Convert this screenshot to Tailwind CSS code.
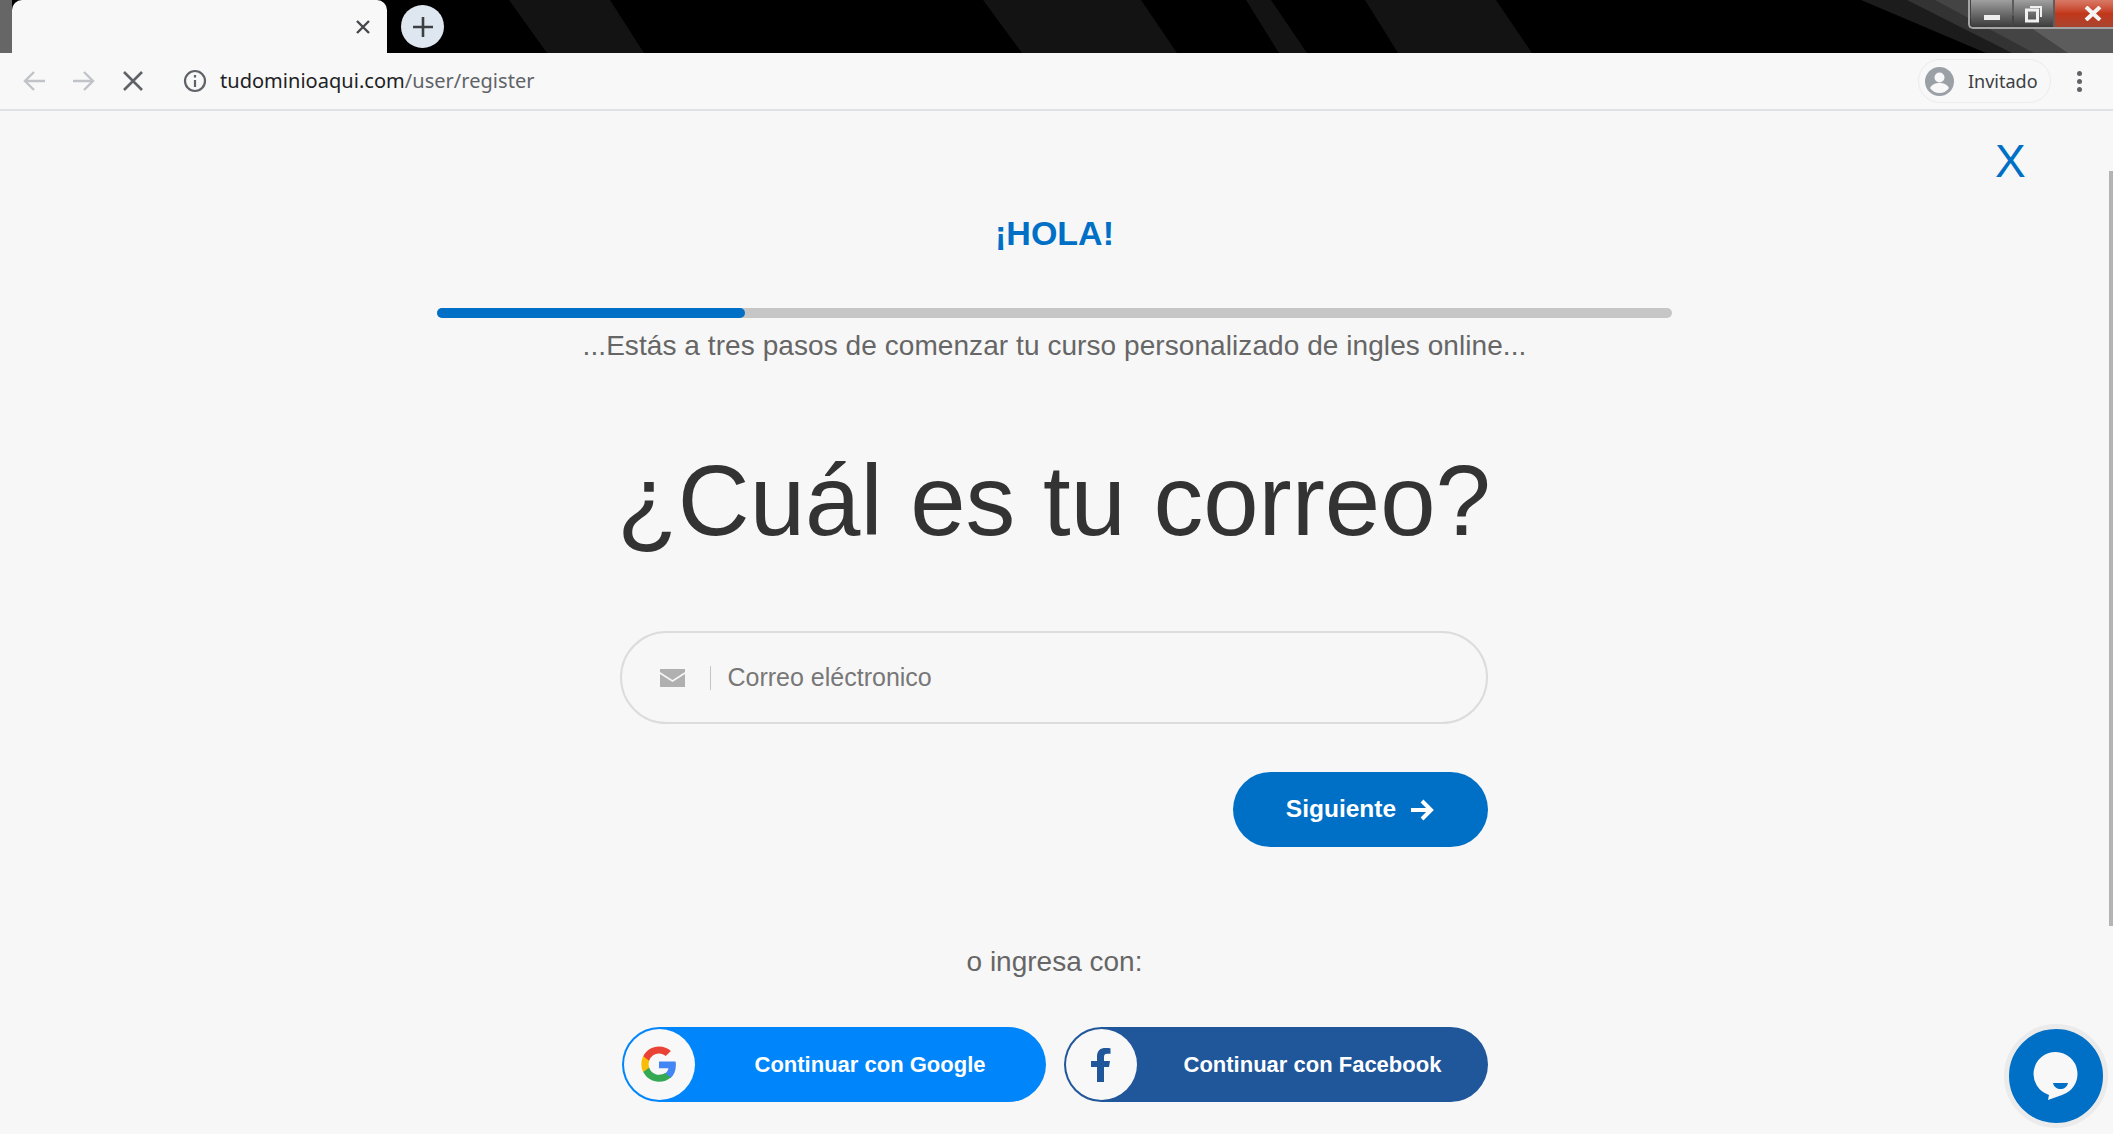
<!DOCTYPE html>
<html lang="es">
<head>
    <meta charset="UTF-8">
    <meta name="viewport" content="width=device-width, initial-scale=1.0">
    <script src="https://cdn.jsdelivr.net/npm/@tailwindcss/browser@4"></script>
    <title>tudominioaqui.com/user/register</title>
</head>
<body class="bg-[#f7f7f7] h-[1134px] overflow-hidden flex flex-col font-['Liberation_Sans',sans-serif]">
    <!-- Barra de pestañas -->
    <div class="relative h-[53px] bg-black flex items-center shrink-0 overflow-hidden">
        <svg class="absolute inset-0" width="2113" height="53" viewBox="0 0 2113 53">
            <polygon points="0,0 12,0 12,53 0,53" fill="#666"/>
            <polygon points="509,0 610,0 644,53 547,53" fill="#131313"/>
            <polygon points="983,0 1141,0 1177,53 1022,53" fill="#131313"/>
            <polygon points="1246,0 1271,0 1307,53 1279,53" fill="#131313"/>
            <polygon points="1365,0 1496,0 1532,53 1398,53" fill="#131313"/>
            <polygon points="1861,0 2113,0 2113,53 1986,53" fill="#1c1c1c"/>
            <polygon points="1907,0 2113,0 2113,53 2012,53" fill="#333"/>
            <polygon points="1935,0 2113,0 2113,53 2034,53" fill="#444"/>
            <polygon points="1990,0 2113,0 2113,53 2068,53" fill="#5c5c5c"/>
        </svg>
        <div class="relative ml-[12px] w-[375px] h-[53px] bg-[#f8f8f8] rounded-t-[10px] flex items-center justify-end pr-[16px]">
            <svg width="16" height="16" viewBox="0 0 16 16" stroke="#45484c" stroke-width="2.4"><path d="M2 2l12 12M14 2L2 14"/></svg>
        </div>
        <div class="relative ml-[14px] w-[43px] h-[43px] rounded-full bg-[#dee7f0] flex items-center justify-center">
            <svg width="22" height="22" viewBox="0 0 22 22" stroke="#3c4043" stroke-width="2.6"><path d="M11 1v20M1 11h20"/></svg>
        </div>
        <!-- Controles de ventana -->
        <div class="absolute top-0 right-0 w-[145px] h-[29px] flex gap-[2px] border-b-2 border-l-2 border-[#a4a4a4] rounded-bl-[5px] pl-[1px]">
            <div class="w-[41px] bg-gradient-to-b from-[#a0a0a0] to-[#3c3c3c] flex items-end justify-center pb-[7px] rounded-bl-[4px]">
                <div class="w-[16px] h-[5px] bg-[#eeeeee]"></div>
            </div>
            <div class="w-[39px] bg-gradient-to-b from-[#a0a0a0] to-[#3c3c3c] flex items-center justify-center">
                <svg width="18" height="18" viewBox="0 0 18 18" fill="none" stroke="#f0f0f0"><rect x="1.500" y="5" width="11" height="11" stroke-width="3"/><path d="M5 2h11v10" stroke-width="2"/></svg>
            </div>
            <div class="flex-1 bg-gradient-to-b from-[#d87a66] via-[#c2371a] to-[#a8442e] flex items-center justify-center pl-[18px]">
                <svg width="18" height="15" viewBox="0 0 18 15" stroke="#f4f4f4" stroke-width="4"><path d="M2 1l14 13M16 1L2 14"/></svg>
            </div>
        </div>
    </div>

    <!-- Barra de direcciones -->
    <div class="h-[58px] shrink-0 bg-[#f8f8f8] border-b-2 border-[#dee1e6] flex items-center pl-[22px] pr-[31px] font-['Noto_Sans',sans-serif]">
        <svg width="24" height="22" viewBox="0 0 24 22" fill="none" stroke="#c0c3c7" stroke-width="2.4"><path d="M23 11H3M12 2l-9 9 9 9"/></svg>
        <svg class="ml-[26px]" width="24" height="22" viewBox="0 0 24 22" fill="none" stroke="#c0c3c7" stroke-width="2.4"><path d="M1 11h20M12 2l9 9-9 9"/></svg>
        <svg class="ml-[26px]" width="22" height="22" viewBox="0 0 22 22" stroke="#5f6368" stroke-width="2.6"><path d="M2 2l18 18M20 2L2 20"/></svg>
        <svg class="ml-[39px]" width="24" height="24" viewBox="0 0 24 24" fill="none" stroke="#5f6368" stroke-width="2.2"><circle cx="12" cy="12" r="10"/><path d="M12 11v7M12 6v2.600"/></svg>
        <div class="ml-[13px] text-[20px] tracking-[0.03px] text-[#5f6368] whitespace-nowrap"><span class="text-[#202124]">tudominioaqui.com</span>/user/register</div>
        <div class="ml-auto h-[44px] w-[133px] rounded-full border border-[#ececec] flex items-center pl-[6px] gap-[14px]">
            <svg width="29" height="29" viewBox="0 0 29 29"><circle cx="14.500" cy="14.500" r="14.500" fill="#9aa0a6"/><circle cx="14.500" cy="10.500" r="5" fill="#f8f8f8"/><path d="M5 21c2-4 6-5 9.500-5s7.500 1 9.500 5c-2 3-5.500 5-9.500 5s-7.500-2-9.500-5z" fill="#f8f8f8"/></svg>
            <span class="text-[18px] text-[#3c4043]">Invitado</span>
        </div>
        <div class="ml-[26px] flex flex-col gap-[3px]">
            <div class="w-[5px] h-[5px] rounded-full bg-[#5f6368]"></div>
            <div class="w-[5px] h-[5px] rounded-full bg-[#5f6368]"></div>
            <div class="w-[5px] h-[5px] rounded-full bg-[#5f6368]"></div>
        </div>
    </div>

    <!-- Contenido -->
    <main class="relative flex-1 flex overflow-hidden">
        <div class="absolute top-[27px] left-[1995px] text-[46px] leading-[46px] text-[#006fc6]">X</div>

        <div class="flex-1 flex flex-col items-center">
            <div class="w-[1235px] flex flex-col items-center">
                <h2 class="mt-[102px] text-[34px] leading-[40px] font-bold text-[#006fc6]">¡HOLA!</h2>
                <div class="mt-[55px] w-full h-[10px] rounded-full bg-[#c6c6c6]">
                    <div class="w-[308px] h-full rounded-full bg-[#006fc6]"></div>
                </div>
                <p class="mt-[11px] text-[28px] leading-[34px] tracking-[0.07px] text-[#666666]">...Estás a tres pasos de comenzar tu curso personalizado de ingles online...</p>
                <h1 class="mt-[83px] text-[99.500px] leading-[110px] text-[#333333] -ml-[1px]">¿Cuál es tu correo?</h1>

                <div class="mt-[75px] w-[868px] mr-[2px] h-[93px] rounded-full border-2 border-[#dcdcdc] flex items-center pl-[38px]">
                    <svg width="25" height="18" viewBox="0 0 25 18"><path d="M0 0h25v3L12.500 11 0 3zM0 5l12.500 8L25 5v13H0z" fill="#b0b0b0"/></svg>
                    <div class="ml-[25px] w-px h-[24px] bg-[#c4c4c4]"></div>
                    <span class="ml-[17px] text-[25px] text-[#777777]">Correo eléctronico</span>
                </div>

                <div class="mt-[48px] w-[866px] flex justify-end">
                    <button class="w-[255px] h-[75px] rounded-full bg-[#006fc6] text-white text-[24.500px] font-bold flex items-center justify-center gap-[14px]">
                        Siguiente
                        <svg width="24" height="24" viewBox="0 0 24 24" fill="none" stroke="#fff" stroke-width="4"><path d="M1 12h20M12 3l9 9-9 9"/></svg>
                    </button>
                </div>

                <p class="mt-[98px] text-[28px] leading-[34px] text-[#666666]">o ingresa con:</p>

                <div class="mt-[48px] w-[866px] flex justify-end gap-[18px]">
                    <button class="w-[424px] h-[75px] rounded-full bg-[#0086fa] flex items-center text-white text-[22px] font-bold pl-[2px]">
                        <span class="w-[71px] h-[71px] rounded-full bg-[#f8f8f8] flex items-center justify-center">
                            <svg width="36" height="37" viewBox="0 0 48 48">
                                <path fill="#4285F4" d="M46.500 24.500c0-1.600-.1-3.100-.4-4.500H24v9h12.700c-.6 2.900-2.200 5.400-4.700 7.100v5.900h7.600c4.400-4.100 6.900-10.100 6.900-17.500z"/>
                                <path fill="#34A853" d="M24 47c6.300 0 11.600-2.100 15.600-5.700L32 35.400c-2.100 1.400-4.800 2.300-8 2.300-6.100 0-11.300-4.100-13.100-9.700H3v6.100C7 42 14.900 47 24 47z"/>
                                <path fill="#FBBC05" d="M10.900 28c-.5-1.400-.7-2.900-.7-4.500s.3-3.100.7-4.500v-6.100H3C1.400 16.100.5 19.700.5 23.500S1.400 30.900 3 34.100z"/>
                                <path fill="#EA4335" d="M24 9.300c3.500 0 6.600 1.200 9 3.500l6.800-6.800C35.600 2.200 30.300 0 24 0 14.900 0 7 5 3 12.900L10.900 19C12.700 13.400 17.900 9.300 24 9.300z"/>
                            </svg>
                        </span>
                        <span class="ml-[60px]">Continuar con Google</span>
                    </button>
                    <button class="w-[424px] h-[75px] rounded-full bg-[#20569a] flex items-center text-white text-[22px] font-bold pl-[2px]">
                        <span class="w-[71px] h-[71px] rounded-full bg-[#f8f8f8] flex items-center justify-center">
                            <svg width="20" height="34" viewBox="0 0 20 34"><path fill="#20569a" d="M6 34V19H0v-6h6V8.500C6 2.500 9.500 0 14.500 0c2 0 4 .2 5 .3v5.500h-3.300c-2.700 0-3.200 1.300-3.200 3.200V13h6l-1 6h-5v15z"/></svg>
                        </span>
                        <span class="ml-[47px]">Continuar con Facebook</span>
                    </button>
                </div>
            </div>
        </div>

        <!-- Barra de desplazamiento -->
        <div class="w-[4px] shrink-0">
            <div class="mt-[60px] h-[755px] bg-[#b4b4b4]"></div>
        </div>

        <!-- Chat -->
        <div class="absolute left-[2004px] top-[913px] w-[104px] h-[104px] rounded-full bg-[#006fc6] border-[5px] border-[#ebebeb] flex items-center justify-center">
            <svg width="46" height="50" viewBox="0 0 46 50">
                <path fill="#f8f8f8" d="M23 1a22 22 0 0 1 6 43L15 49l1-5A22 22 0 0 1 23 1z"/>
                <path fill="#006fc6" d="M20 32h15c-1 4-4 6-7.500 6S21 36 20 32z"/>
            </svg>
        </div>
    </main>
</body>
</html>
